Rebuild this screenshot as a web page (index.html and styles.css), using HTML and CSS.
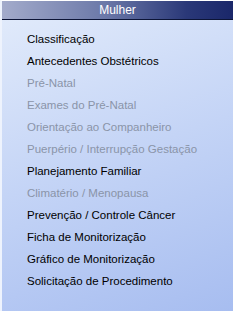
FILE: index.html
```html
<!DOCTYPE html>
<html lang="pt">
<head>
    <meta charset="UTF-8">
    <title>Mulher</title>
    <link rel="stylesheet" href="styles.css">
</head>
<body>
    <div class="panel">
        <div class="panel-header">Mulher</div>
        <ul class="menu">
            <li>Classificação</li>
            <li>Antecedentes Obstétricos</li>
            <li class="disabled">Pré-Natal</li>
            <li class="disabled">Exames do Pré-Natal</li>
            <li class="disabled">Orientação ao Companheiro</li>
            <li class="disabled">Puerpério / Interrupção Gestação</li>
            <li>Planejamento Familiar</li>
            <li class="disabled">Climatério / Menopausa</li>
            <li>Prevenção / Controle Câncer</li>
            <li>Ficha de Monitorização</li>
            <li>Gráfico de Monitorização</li>
            <li>Solicitação de Procedimento</li>
        </ul>
    </div>
</body>
</html>
```
FILE: styles.css
```css
body {
    margin: 0;
    padding: 0;
    font-family: 'Liberation Sans', Arial, sans-serif;
    font-size: 11.5px;
}
.panel {
    width: 233px;
    height: 311px;
    box-sizing: border-box;
    border-left: 2px solid #eef3fd;
    border-top: 1px solid #ffffff;
    background: linear-gradient(160deg, #e3ecfb 0%, #c4d4f6 50%, #a7bdf0 100%);
}
.panel-header {
    height: 18px;
    line-height: 18px;
    font-size: 12px;
    text-align: center;
    color: #ffffff;
    border-bottom: 1px solid #0c1436;
    background: linear-gradient(to right, #a3abcb 0%, #6b78a8 45%, #2a3878 80%, #1a276a 100%);
}
.menu {
    list-style: none;
    margin: 0;
    padding: 8px 0 0 25px;
}
.menu li {
    height: 22px;
    line-height: 22px;
    color: #000000;
    white-space: nowrap;
}
.menu li.disabled {
    color: #8a94a8;
}
```
